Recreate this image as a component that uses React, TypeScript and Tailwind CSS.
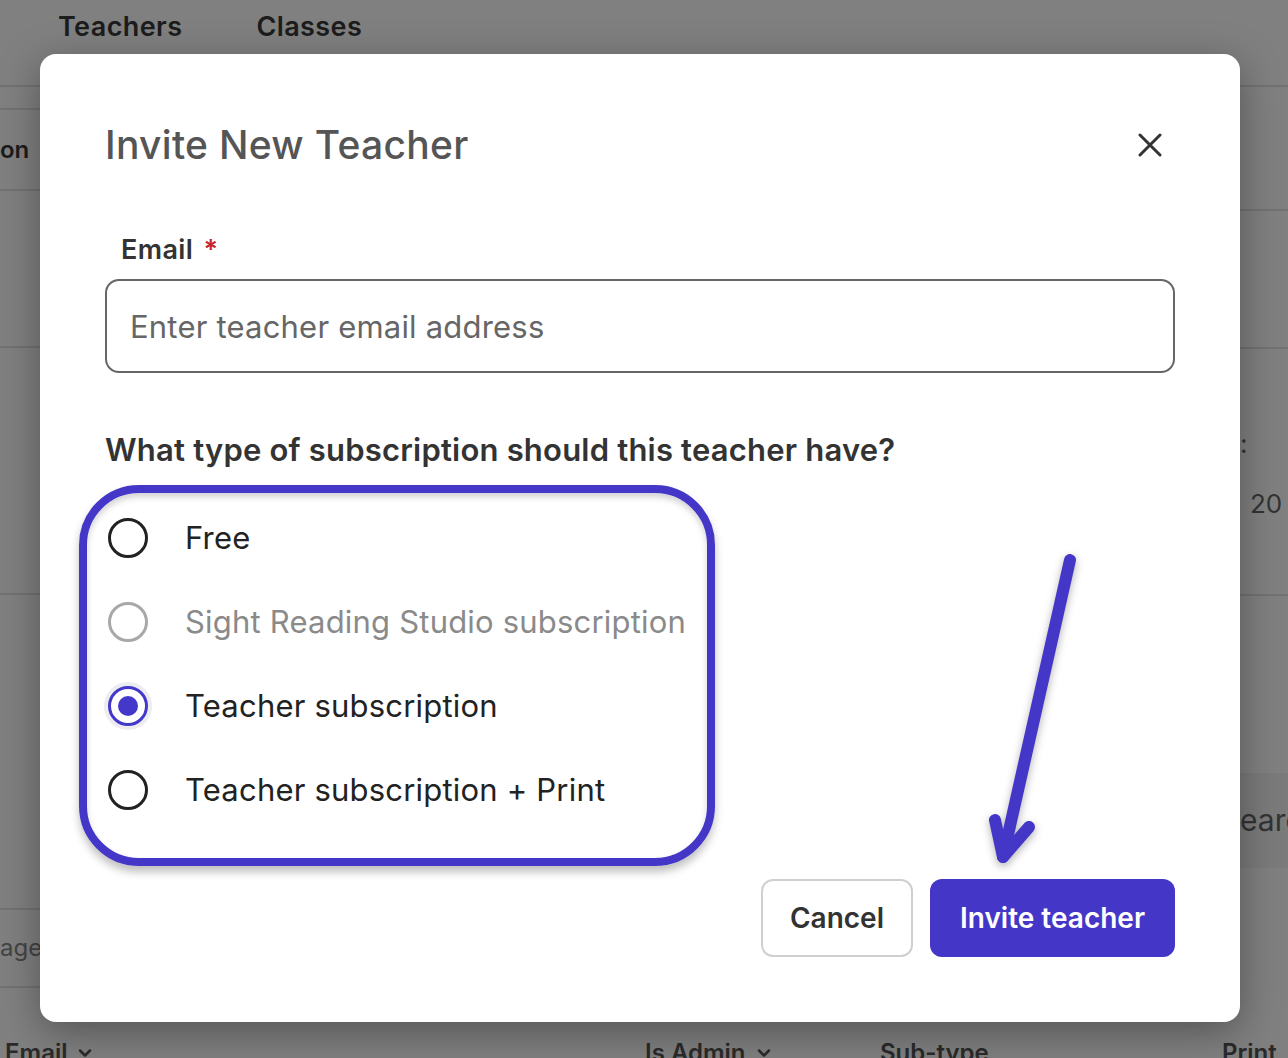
import { ChevronDown } from 'lucide-react';

type RadioState = 'off' | 'disabled' | 'on';

const options: { label: string; state: RadioState }[] = [
  { label: 'Free', state: 'off' },
  { label: 'Sight Reading Studio subscription', state: 'disabled' },
  { label: 'Teacher subscription', state: 'on' },
  { label: 'Teacher subscription + Print', state: 'off' },
];

function RadioRow({ label, state }: { label: string; state: RadioState }) {
  return (
    <label className="flex h-[84px] items-center gap-[37px] pl-[21px]">
      {state === 'on' ? (
        <span className="flex h-10 w-10 items-center justify-center rounded-full border-[3px] border-[#4338ca] shadow-[0_0_0_4px_#ececf1]">
          <span className="h-[20px] w-[20px] rounded-full bg-[#4338ca]" />
        </span>
      ) : (
        <span
          className={
            state === 'disabled'
              ? 'h-10 w-10 rounded-full border-[3px] border-[#a8a8a8]'
              : 'h-10 w-10 rounded-full border-[3.5px] border-[#222]'
          }
        />
      )}
      <span
        className={
          state === 'disabled'
            ? 'text-[31px] leading-[36px] tracking-[0.2px] text-[#8a8a8a]'
            : 'text-[31px] leading-[36px] tracking-[0.2px] text-[#222]'
        }
      >
        {label}
      </span>
    </label>
  );
}

function Background() {
  return (
    <div className="flex h-full flex-col bg-[#808080] text-[#1c1c1c]">
      <nav className="flex h-[87px] gap-[74px] border-b-2 border-[#727272] pl-[58px] pt-[7px] text-[27px] font-semibold tracking-[0.4px]">
        <span>Teachers</span>
        <span>Classes</span>
      </nav>
      <div className="flex flex-1 justify-between">
        <div className="flex w-[40px] flex-col overflow-hidden">
          <div className="h-[21px]" />
          <div className="flex h-[83px] items-center border-y-2 border-[#727272] text-[24px] font-semibold">on</div>
          <div className="h-[157px] border-b-2 border-[#727272]" />
          <div className="h-[247px] border-b-2 border-[#727272]" />
          <div className="h-[315px] border-b-2 border-[#727272]" />
          <div className="flex h-[78px] items-center border-b-2 border-[#727272] text-[24px] text-[#444]">age</div>
        </div>
        <div className="flex w-[48px] flex-col overflow-hidden">
          <div className="h-[124px] border-b-2 border-[#727272]" />
          <div className="h-[138px] border-b-2 border-[#727272]" />
          <div className="flex h-[247px] flex-col border-b-2 border-[#727272] pt-[80px] text-[26px] text-[#333]">
            <span className="leading-[30px]">:</span>
            <span className="pl-[10px] pt-[30px] leading-[30px]">20</span>
          </div>
          <div className="h-[177px]" />
          <div className="flex h-[95px] items-center bg-[#7b7b7b] text-[30px] text-[#333]">earc</div>
        </div>
      </div>
      <div className="flex h-[28px] items-start pl-[5px] pt-[8px] text-[24px] font-semibold leading-[30px] text-[#2a2a2a]">
        <span className="flex w-[640px] items-center gap-2">
          Email <ChevronDown size={20} strokeWidth={3} />
        </span>
        <span className="flex w-[235px] items-center gap-2">
          Is Admin <ChevronDown size={20} strokeWidth={3} />
        </span>
        <span className="w-[342px]">Sub-type</span>
        <span>Print</span>
      </div>
    </div>
  );
}

export default function App() {
  return (
    <div className="relative h-[1058px] w-[1288px] overflow-hidden font-['Inter',sans-serif]">
      <Background />

      <div className="absolute inset-0 pl-[40px] pt-[54px]">
        <div className="relative flex h-[968px] w-[1200px] flex-col rounded-[16px] bg-white px-[65px] pb-[65px] pt-[68px] shadow-[0_10px_40px_rgba(0,0,0,0.35)]">
          <div className="flex h-[46px] items-center justify-between">
            <h2 className="text-[39px] font-medium leading-[46px] tracking-[0.3px] text-[#555]">Invite New Teacher</h2>
            <button className="mr-[10px] flex h-[30px] w-[30px] items-center justify-center" aria-label="Close">
              <svg width="24" height="24" viewBox="0 0 24 24" fill="none" stroke="#333" strokeWidth="3" strokeLinecap="round">
                <path d="M2 2 L22 22 M22 2 L2 22" />
              </svg>
            </button>
          </div>

          <label className="mt-[66px] pl-[16px] text-[27px] font-semibold leading-[32px] tracking-[0.4px] text-[#333]">
            Email <span className="ml-[3px] text-[#c4262e]">*</span>
          </label>
          <input
            className="mt-[13px] h-[94px] w-full rounded-[14px] border-2 border-[#666] px-[23px] text-[31px] tracking-[0.2px] text-[#222] outline-none placeholder:text-[#666]"
            placeholder="Enter teacher email address"
          />

          <p className="mt-[59px] text-[31px] font-semibold leading-[36px] tracking-[0.2px] text-[#333]">
            What type of subscription should this teacher have?
          </p>

          <div className="-ml-[26px] mt-[17px] h-[381px] w-[636px] rounded-[60px] border-8 border-[#4437c8] pt-[3px] shadow-[0_6px_8px_rgba(0,0,0,0.25),inset_0_4px_6px_rgba(0,0,0,0.18)]">
            {options.map((o) => (
              <RadioRow key={o.label} label={o.label} state={o.state} />
            ))}
          </div>

          <div className="mt-[13px] flex justify-end gap-[17px]">
            <button className="h-[78px] w-[152px] rounded-[12px] border-2 border-[#cfcfcf] text-[28px] font-semibold text-[#333]">
              Cancel
            </button>
            <button className="h-[78px] w-[245px] rounded-[12px] bg-[#4437c8] text-[28px] font-semibold text-white">
              Invite teacher
            </button>
          </div>

          <svg
            className="absolute left-0 top-0 drop-shadow-[0_3px_4px_rgba(0,0,0,0.3)]"
            width="1200"
            height="968"
            viewBox="0 0 1200 968"
            fill="none"
            stroke="#4437c8"
            strokeWidth="12"
            strokeLinecap="round"
            strokeLinejoin="round"
          >
            <path d="M1030 506 L963 803" />
            <path d="M955 766 L963 803 L989 773" />
          </svg>
        </div>
      </div>
    </div>
  );
}
